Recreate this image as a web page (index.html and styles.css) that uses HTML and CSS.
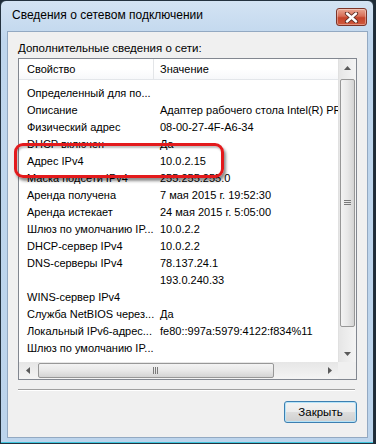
FILE: index.html
```html
<!DOCTYPE html>
<html lang="ru">
<head>
    <meta charset="UTF-8">
    <title>Сведения о сетевом подключении</title>
    <link rel="stylesheet" href="styles.css">
</head>
<body>
    <div class="window">
        <div class="titlebar">
            <span class="title">Сведения о сетевом подключении</span>
            <button class="close" title="Закрыть">
                <svg width="17" height="11" viewBox="0 0 17 11">
                    <path d="M4 1.5 L13 9.5 M13 1.5 L4 9.5" stroke="#5a2a22" stroke-width="4.2" stroke-linecap="round"/>
                    <path d="M4 1.5 L13 9.5 M13 1.5 L4 9.5" stroke="#fff" stroke-width="2.4" stroke-linecap="round"/>
                </svg>
            </button>
        </div>

        <div class="client">
            <div class="label">Дополнительные сведения о сети:</div>

            <div class="listbox">
                <div class="view">
                    <div class="table">
                        <div class="head">
                            <div class="hcell first">Свойство</div>
                            <div class="hcell">Значение</div>
                        </div>
                        <div class="rows">
                            <div class="row"><span>Определенный для по...</span><span></span></div>
                            <div class="row"><span>Описание</span><span>Адаптер рабочего стола Intel(R) PRO/1000 MT</span></div>
                            <div class="row"><span>Физический адрес</span><span>08-00-27-4F-A6-34</span></div>
                            <div class="row"><span>DHCP включен</span><span>Да</span></div>
                            <div class="row"><span>Адрес IPv4</span><span>10.0.2.15</span></div>
                            <div class="row"><span>Маска подсети IPv4</span><span>255.255.255.0</span></div>
                            <div class="row"><span>Аренда получена</span><span>7 мая 2015 г. 19:52:30</span></div>
                            <div class="row"><span>Аренда истекает</span><span>24 мая 2015 г. 5:05:00</span></div>
                            <div class="row"><span>Шлюз по умолчанию IP...</span><span>10.0.2.2</span></div>
                            <div class="row"><span>DHCP-сервер IPv4</span><span>10.0.2.2</span></div>
                            <div class="row"><span>DNS-серверы IPv4</span><span>78.137.24.1</span></div>
                            <div class="row"><span></span><span>193.0.240.33</span></div>
                            <div class="row"><span>WINS-сервер IPv4</span><span></span></div>
                            <div class="row"><span>Служба NetBIOS через...</span><span>Да</span></div>
                            <div class="row"><span>Локальный IPv6-адрес...</span><span>fe80::997a:5979:4122:f834%11</span></div>
                            <div class="row"><span>Шлюз по умолчанию IP...</span><span></span></div>
                            <div class="row"><span>DNS-серверы IPv6</span><span></span></div>
                        </div>
                    </div>
                    <div class="vscroll">
                        <div class="arrow"><svg width="7" height="4"><path d="M0 4 L3.5 0 L7 4 Z" fill="#5a5a5a"/></svg></div>
                        <div class="vtrack">
                            <div class="vthumb">
                                <svg width="7" height="6"><path d="M0 .5 H7 M0 2.5 H7 M0 4.5 H7" stroke="#7a7a7a"/></svg>
                            </div>
                        </div>
                        <div class="arrow"><svg width="7" height="4"><path d="M0 0 L3.5 4 L7 0 Z" fill="#5a5a5a"/></svg></div>
                    </div>
                </div>
                <div class="hbar">
                    <div class="hscroll">
                        <div class="harrow"><svg width="4" height="7"><path d="M4 0 L0 3.5 L4 7 Z" fill="#5a5a5a"/></svg></div>
                        <div class="htrack">
                            <div class="hthumb">
                                <svg width="6" height="7"><path d="M.5 0 V7 M2.5 0 V7 M4.5 0 V7" stroke="#7a7a7a"/></svg>
                            </div>
                        </div>
                        <div class="harrow"><svg width="4" height="7"><path d="M0 0 L4 3.5 L0 7 Z" fill="#5a5a5a"/></svg></div>
                    </div>
                    <div class="corner"></div>
                </div>

                <!-- red mark around the IPv4 address -->
                <div class="highlight"></div>
            </div>

            <div class="separator"></div>

            <div class="actions">
                <button class="btn">Закрыть</button>
            </div>
        </div>
    </div>
</body>
</html>
```

FILE: styles.css
```css
* {
    box-sizing: border-box;
}
body {
    margin: 0;
    background: #1f2c38;
    font-family: "Liberation Sans", Arial, sans-serif;
    font-size: 11px;
    color: #000;
}
.window {
    width: 374px;
    height: 444px;
    border: 1px solid #24323f;
    border-radius: 6px 6px 0 0;
    background: linear-gradient(#d3e3f3, #bfd6ed 40px, #bcd4ec);
    padding: 0 5px 5px 6px;
    display: flex;
    flex-direction: column;
    box-shadow: inset 0 -1px #40c6de;
}
.titlebar {
    height: 30px;
    display: flex;
    align-items: center;
    justify-content: space-between;
    padding: 0 1px 2px 5px;
}
.title {
    font-size: 12px;
    color: #000;
}
.close {
    width: 31px;
    height: 18px;
    margin-top: 4px;
    padding: 0;
    border: 1px solid #7d3428;
    border-radius: 3px;
    background: linear-gradient(#e9a793, #d76e57 45%, #c5432a 55%, #cf5a3e);
    box-shadow: inset 0 0 0 1px rgba(255,255,255,0.35);
    display: flex;
    align-items: center;
    justify-content: center;
}
.client {
    flex: 1;
    background: #f0f0f0;
    border: 1px solid #93a9c2;
    padding: 9px 9px 0 10px;
    display: flex;
    flex-direction: column;
}
.label {
    height: 17px;
    line-height: 15px;
    font-size: 11.5px;
}
.listbox {
    position: relative;
    width: 339px;
    height: 322px;
    border: 1px solid #828790;
    background: #fff;
    display: flex;
    flex-direction: column;
}
.view {
    display: flex;
    height: 303px;
}
.table {
    width: 319px;
    overflow: hidden;
}
.head {
    display: grid;
    grid-template-columns: 135px 1fr;
    height: 21px;
    background: linear-gradient(#fff, #fff 50%, #f7f8fa);
    border-bottom: 1px solid #e3e6ea;
}
.hcell {
    padding-left: 6px;
    line-height: 20px;
    white-space: nowrap;
}
.hcell.first {
    padding-left: 8px;
    border-right: 1px solid #e3e5e8;
}
.rows {
    padding-top: 5px;
    height: 281px;
    overflow: hidden;
}
.row {
    display: grid;
    grid-template-columns: 135px 1fr;
    height: 17px;
    line-height: 17px;
    white-space: nowrap;
}
.row span {
    overflow: hidden;
    padding-left: 6px;
}
.row span:first-child {
    padding-left: 8px;
}
.vscroll {
    width: 18px;
    display: flex;
    flex-direction: column;
    background: linear-gradient(90deg, #e6e6e6, #f4f4f4);
    border-left: 1px solid #e0e0e0;
}
.arrow {
    height: 17px;
    display: flex;
    align-items: center;
    justify-content: center;
}
.vtrack {
    flex: 1;
    padding: 3px 1px 18px 1px;
    display: flex;
}
.vthumb {
    flex: 1;
    border: 1px solid #979797;
    border-radius: 2px;
    background: linear-gradient(90deg, #f3f3f3, #e8e8e8 50%, #d4d4d4);
    display: flex;
    align-items: center;
    justify-content: center;
}
.hbar {
    display: flex;
    height: 17px;
}
.hscroll {
    width: 319px;
    display: flex;
    background: linear-gradient(#e6e6e6, #f4f4f4);
}
.harrow {
    width: 17px;
    display: flex;
    align-items: center;
    justify-content: center;
}
.htrack {
    flex: 1;
    padding: 1px 47px 1px 2px;
    display: flex;
}
.hthumb {
    flex: 1;
    border: 1px solid #979797;
    border-radius: 2px;
    background: linear-gradient(#f3f3f3, #e8e8e8 50%, #d4d4d4);
    display: flex;
    align-items: center;
    justify-content: center;
}
.corner {
    flex: 1;
    background: #f0f0f0;
}
.highlight {
    position: absolute;
    left: -5px;
    top: 84px;
    width: 210px;
    height: 35px;
    border: 3px solid #e31a1c;
    border-radius: 9px;
    box-shadow: 2px 3px 3px rgba(0,0,0,0.45), inset 1px 2px 2px rgba(0,0,0,0.25);
}
.separator {
    margin-top: 9px;
    width: 337px;
    border-top: 1px solid #a0a0a0;
    border-bottom: 1px solid #fff;
}
.actions {
    display: flex;
    justify-content: flex-end;
    padding: 10px 0 0 0;
    width: 339px;
}
.btn {
    width: 73px;
    height: 22px;
    font-family: "Liberation Sans", Arial, sans-serif;
    font-size: 11.5px;
    color: #000;
    border: 1px solid #3c7fb1;
    border-radius: 3px;
    background: linear-gradient(#f3f3f3, #ebebeb 50%, #dddddd 51%, #cfcfcf);
    box-shadow: inset 0 0 0 1px #b5e3f8;
    padding: 0;
}
```
